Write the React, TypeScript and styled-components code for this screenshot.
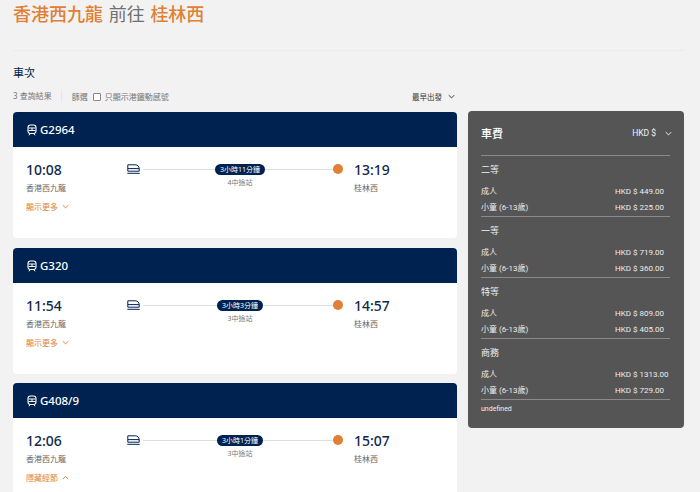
import React from 'react';
import styled, { createGlobalStyle } from 'styled-components';

const GlobalStyle = createGlobalStyle`
  html, body {
    margin: 0;
    padding: 0;
    height: 492px;
    overflow: hidden;
    background: #f2f2f2;
    font-family: "Noto Sans", "Noto Sans CJK TC", sans-serif;
  }
  * {
    box-sizing: border-box;
  }
`;

const navy = '#002250';
const orange = '#e07f35';

const trains = [
  { no: 'G2964', dep: '10:08', arr: '13:19', duration: '3小時11分鐘', stops: '4中途站', more: '顯示更多', open: false, marginBottom: 10 },
  { no: 'G320', dep: '11:54', arr: '14:57', duration: '3小時3分鐘', stops: '3中途站', more: '顯示更多', open: false, marginBottom: 9 },
  { no: 'G408/9', dep: '12:06', arr: '15:07', duration: '3小時1分鐘', stops: '3中途站', more: '隱藏經節', open: true, marginBottom: 0 },
];

const fares = [
  { name: '二等', adult: '449.00', child: '225.00' },
  { name: '一等', adult: '719.00', child: '360.00' },
  { name: '特等', adult: '809.00', child: '405.00' },
  { name: '商務', adult: '1313.00', child: '729.00' },
];

const Page = styled.div`
  width: 700px;
  height: 492px;
  overflow: hidden;
  padding: 0 16px 0 13px;
`;

const Heading = styled.h1`
  margin: 0;
  padding-top: 3px;
  height: 51px;
  border-bottom: 1px solid #ebebeb;
  font-size: 18px;
  line-height: 23px;
  font-weight: 400;
  word-spacing: 1px;
  color: #6f6f6f;
`;

const Place = styled.span`
  color: ${orange};
  font-weight: 500;
`;

const Columns = styled.div`
  display: flex;
  gap: 11px;
  align-items: flex-start;
`;

const MainColumn = styled.div`
  width: 444px;
  flex: none;
`;

const SectionTitle = styled.h2`
  margin: 14px 0 0;
  font-size: 11px;
  line-height: 16px;
  font-weight: 400;
  color: ${navy};
`;

const Toolbar = styled.div`
  display: flex;
  align-items: center;
  height: 16px;
  margin: 7px 0 8px;
  font-size: 8px;
  color: #777;
`;

const ResultCount = styled.span`
  padding-right: 9px;
  margin-right: 10px;
  border-right: 1px solid #e6e6e6;
  line-height: 12px;
`;

const CheckBox = styled.span`
  width: 8px;
  height: 8px;
  margin: 1px 4px 0 5px;
  border: 1px solid #8a8a8a;
  border-radius: 1px;
  background: #fff;
`;

const SortButton = styled.span`
  margin-left: auto;
  display: flex;
  align-items: center;
  gap: 6px;
  padding-right: 2px;
  font-size: 7.5px;
  color: #333;
`;

const Card = styled.div<{ $marginBottom: number }>`
  height: 126px;
  margin-bottom: ${({ $marginBottom }) => $marginBottom}px;
  background: #fff;
  border-radius: 4px;
  overflow: hidden;
`;

const CardHeader = styled.div`
  height: 35px;
  padding: 0 14px;
  display: flex;
  align-items: center;
  gap: 3px;
  background: ${navy};
  color: #fff;
  font-size: 11.5px;
  font-weight: 500;
`;

const CardBody = styled.div`
  display: flex;
  padding: 14px 14px 0 13px;
`;

const TimeBlock = styled.div<{ $width: number }>`
  width: ${({ $width }) => $width}px;
  flex: none;
`;

const Time = styled.div`
  font-size: 14px;
  line-height: 18px;
  font-weight: 500;
  color: #12284b;
`;

const Station = styled.div`
  margin-top: 3px;
  font-size: 8px;
  line-height: 11px;
  color: #666;
`;

const Toggle = styled.div`
  display: flex;
  align-items: center;
  gap: 4px;
  margin-top: 8px;
  font-size: 8px;
  line-height: 11px;
  color: ${orange};
`;

const Route = styled.div`
  width: 216px;
  flex: none;
  margin-right: 11px;
  display: flex;
  align-items: flex-start;
  gap: 3px;
`;

const TrackArea = styled.div`
  flex: 1;
  position: relative;
  height: 30px;
  display: flex;
  flex-direction: column;
  align-items: center;
  margin-top: 3px;
  padding-left: 4px;
`;

const TrackLine = styled.div`
  position: absolute;
  left: 0;
  right: 0;
  top: 5px;
  height: 1px;
  background: #dcdfe3;
`;

const DurationPill = styled.span`
  position: relative;
  height: 11px;
  padding: 0 5px;
  border-radius: 6px;
  background: ${navy};
  color: #fff;
  font-size: 7px;
  line-height: 11px;
`;

const Stops = styled.span`
  margin-top: 3px;
  font-size: 7px;
  line-height: 10px;
  color: #777;
`;

const ArrivalDot = styled.span`
  width: 10px;
  height: 10px;
  flex: none;
  margin: 3px 0 0 -3px;
  border-radius: 50%;
  background: ${orange};
`;

const Sidebar = styled.aside`
  width: 216px;
  flex: none;
  height: 317px;
  margin-top: 60px;
  padding: 0 14px 0 13px;
  background: #555;
  border-radius: 4px;
  color: #ededed;
`;

const SidebarHeader = styled.div`
  height: 45px;
  display: flex;
  align-items: center;
  justify-content: space-between;
  border-bottom: 1px solid #8a8a8a;
`;

const SidebarTitle = styled.span`
  font-size: 11px;
  font-weight: 500;
  color: #fff;
`;

const Currency = styled.span`
  display: flex;
  align-items: center;
  gap: 9px;
  margin-right: -2px;
  font-family: Roboto, "Noto Sans CJK TC", sans-serif;
  font-size: 8.5px;
  color: #f2f2f2;
`;

const FareGroup = styled.div`
  height: 61px;
  border-bottom: 1px solid #8a8a8a;
  padding-top: 7px;
`;

const FareName = styled.div`
  font-size: 9px;
  line-height: 14px;
  margin-bottom: 7px;
  color: #f0f0f0;
`;

const FareRow = styled.div`
  display: flex;
  justify-content: space-between;
  height: 16px;
  font-family: Roboto, "Noto Sans CJK TC", sans-serif;
  font-size: 8px;
  line-height: 16px;
`;

const FarePrice = styled.span`
  width: 55px;
  white-space: nowrap;
`;

const Note = styled.div`
  margin-top: 4px;
  font-family: Roboto, sans-serif;
  font-size: 7px;
  line-height: 10px;
  color: #f0f0f0;
`;

const Chevron = ({ up, color, size = 7 }: { up?: boolean; color: string; size?: number }) => (
  <svg width={size} height={size} viewBox="0 0 10 10" fill="none">
    <path d={up ? 'M1.5 7 5 3.5 8.5 7' : 'M1.5 3.5 5 7 8.5 3.5'} stroke={color} strokeWidth="1.4" strokeLinecap="round" strokeLinejoin="round" />
  </svg>
);

const TrainFront = () => (
  <svg width="10" height="12" viewBox="0 0 10 12" fill="none">
    <rect x="1" y="1" width="8" height="8.5" rx="2.5" stroke="#fff" strokeWidth="1.1" />
    <path d="M1.5 4h7M5 4v2.5M1.5 6.5h7" stroke="#fff" strokeWidth="1" />
    <path d="M3 9.5 2 11.3M7 9.5l1 1.8" stroke="#fff" strokeWidth="1" />
  </svg>
);

const TrainSide = () => (
  <svg width="13" height="10" viewBox="0 0 13 10" fill="none" style={{ flex: 'none', marginTop: 3 }}>
    <path d="M.8.8h7.4c2.2 0 4 1.6 4 3.8v2.6H.8z" stroke={navy} strokeWidth="1" strokeLinejoin="round" />
    <path d="M.8 4.6h11.4" stroke={navy} strokeWidth="1" />
    <path d="M.3 9.3h12.4" stroke={navy} strokeWidth="1" />
  </svg>
);

const App: React.FC = () => {
  return (
    <Page>
      <GlobalStyle />
      <Heading>
        <Place>香港西九龍</Place> 前往 <Place>桂林西</Place>
      </Heading>
      <Columns>
        <MainColumn>
          <SectionTitle>車次</SectionTitle>
          <Toolbar>
            <ResultCount>3 查詢結果</ResultCount>
            <span>篩選</span>
            <CheckBox />
            <span>只顯示港鐵動感號</span>
            <SortButton>
              最早出發 <Chevron color="#333" />
            </SortButton>
          </Toolbar>
          {trains.map((train) => (
            <Card key={train.no} $marginBottom={train.marginBottom}>
              <CardHeader>
                <TrainFront />
                {train.no}
              </CardHeader>
              <CardBody>
                <TimeBlock $width={101}>
                  <Time>{train.dep}</Time>
                  <Station>香港西九龍</Station>
                  <Toggle>
                    {train.more}
                    <Chevron up={train.open} color={orange} />
                  </Toggle>
                </TimeBlock>
                <Route>
                  <TrainSide />
                  <TrackArea>
                    <TrackLine />
                    <DurationPill>{train.duration}</DurationPill>
                    <Stops>{train.stops}</Stops>
                  </TrackArea>
                  <ArrivalDot />
                </Route>
                <TimeBlock $width={60}>
                  <Time>{train.arr}</Time>
                  <Station>桂林西</Station>
                </TimeBlock>
              </CardBody>
            </Card>
          ))}
        </MainColumn>
        <Sidebar>
          <SidebarHeader>
            <SidebarTitle>車費</SidebarTitle>
            <Currency>
              HKD $ <Chevron color="#f2f2f2" />
            </Currency>
          </SidebarHeader>
          {fares.map((fare) => (
            <FareGroup key={fare.name}>
              <FareName>{fare.name}</FareName>
              <FareRow>
                <span>成人</span>
                <FarePrice>HKD $ {fare.adult}</FarePrice>
              </FareRow>
              <FareRow>
                <span>小童 (6-13歲)</span>
                <FarePrice>HKD $ {fare.child}</FarePrice>
              </FareRow>
            </FareGroup>
          ))}
          <Note>undefined</Note>
        </Sidebar>
      </Columns>
    </Page>
  );
};

export default App;
